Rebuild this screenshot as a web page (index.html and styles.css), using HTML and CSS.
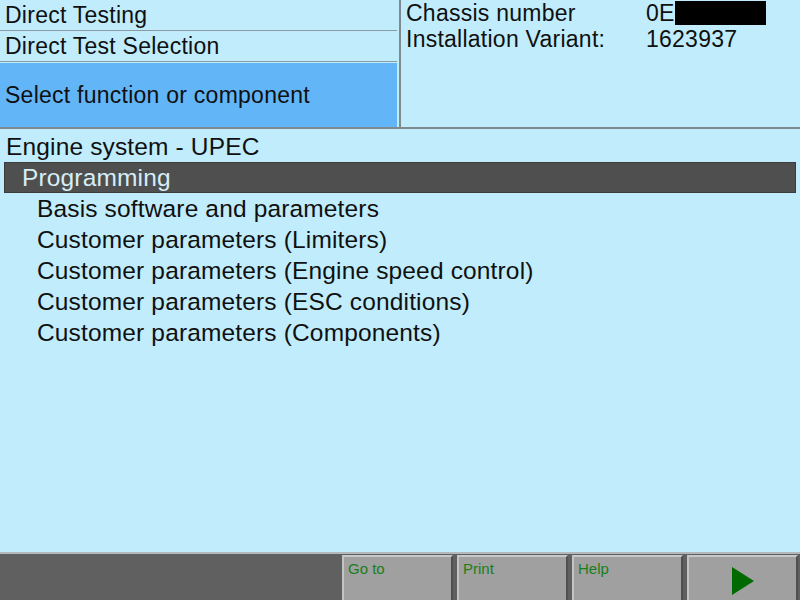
FILE: index.html
```html
<!DOCTYPE html>
<html lang="en">
<head>
    <meta charset="UTF-8">
    <title>Direct Testing</title>
    <link rel="stylesheet" href="styles.css">
</head>
<body>
<div class="screen">

    <!-- Cabecera -->
    <div class="top">
        <div class="crumbs">
            <div class="crumb">Direct Testing</div>
            <div class="crumb">Direct Test Selection</div>
            <div class="crumb prompt">Select function or component</div>
        </div>
        <div class="info">
            <div class="info-row">
                <span class="label">Chassis number</span>
                <span class="value">0E<span class="redact"></span></span>
            </div>
            <div class="info-row">
                <span class="label">Installation Variant:</span>
                <span class="value">1623937</span>
            </div>
        </div>
    </div>

    <!-- Lista -->
    <div class="main">
        <div class="row title">Engine system - UPEC</div>
        <div class="row group">Programming</div>
        <div class="row item">Basis software and parameters</div>
        <div class="row item">Customer parameters (Limiters)</div>
        <div class="row item">Customer parameters (Engine speed control)</div>
        <div class="row item">Customer parameters (ESC conditions)</div>
        <div class="row item">Customer parameters (Components)</div>
    </div>

    <!-- Teclas -->
    <div class="softkeys">
        <div class="key">Go to</div>
        <div class="key">Print</div>
        <div class="key">Help</div>
        <div class="key play">
            <svg width="22" height="28" viewBox="0 0 22 28"><polygon points="0,0 22,14 0,28" fill="#006a00"/></svg>
        </div>
    </div>

</div>
</body>
</html>
```

FILE: styles.css
```css
body {
    margin: 0;
    padding: 0;
    font-family: "Liberation Sans", Arial, sans-serif;
    background-color: #c0ecfc;
    overflow: hidden;
}

.screen {
    width: 800px;
    height: 600px;
    display: flex;
    flex-direction: column;
    background-color: #c0ecfc;
    color: #101010;
}

.top {
    display: flex;
    height: 127px;
    border-bottom: 2px solid #7f8a8e;
    letter-spacing: 0.25px;
}

.crumbs {
    width: 397px;
    padding-right: 2px;
    border-right: 2px solid #7f8a8e;
    display: flex;
    flex-direction: column;
}

.crumb {
    font-size: 23px;
    height: 30px;
    line-height: 31px;
    padding-left: 5px;
    border-bottom: 1px solid #8a9ca2;
    white-space: nowrap;
}

.crumb.prompt {
    flex: 1;
    border-bottom: none;
    background-color: #62b6f8;
    display: flex;
    align-items: center;
    margin-top: 1px;
}

.info {
    flex: 1;
    padding: 0 0 0 5px;
}

.info-row {
    display: flex;
    font-size: 23px;
    height: 26px;
    line-height: 27px;
}

.label {
    width: 240px;
}

.value {
    display: flex;
    align-items: center;
}

.redact {
    display: inline-block;
    width: 91px;
    height: 24px;
    background-color: #000;
}

.main {
    flex: 1;
    padding: 2px 4px 0 4px;
    letter-spacing: 0.15px;
}

.row {
    font-size: 24.5px;
    height: 31px;
    line-height: 31px;
    white-space: nowrap;
}

.title {
    padding-left: 2px;
}

.group {
    background-color: #4f4f4f;
    border: 1px solid #3c3c3c;
    height: 29px;
    line-height: 29px;
    color: #d6eef6;
    padding-left: 17px;
}

.item {
    padding-left: 33px;
}

.softkeys {
    height: 46px;
    background-color: #606060;
    border-top: 2px solid #b4b8ba;
    display: flex;
    justify-content: flex-end;
    align-items: flex-end;
    gap: 4px;
    padding-right: 2px;
}

.key {
    width: 111px;
    height: 45px;
    background-color: #a0a0a0;
    border-top: 2px solid #c8c8c8;
    border-left: 2px solid #c4c4c4;
    border-right: 2px solid #505050;
    color: #1a7e1a;
    font-size: 15px;
    padding: 3px 0 0 4px;
    box-sizing: border-box;
    line-height: 17px;
}

.key.play {
    display: flex;
    justify-content: center;
    align-items: center;
    padding: 4px 0 0 0;
}
```
